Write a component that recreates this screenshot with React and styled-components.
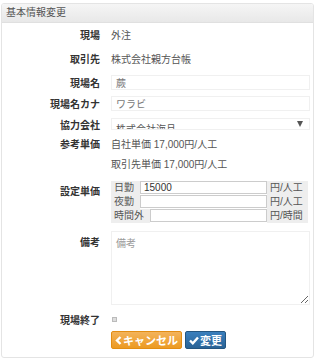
import React from "react";
import styled, { createGlobalStyle } from "styled-components";

const GlobalStyle = createGlobalStyle`
  html, body {
    margin: 0;
    padding: 0;
    background: #fff;
  }
  body {
    font-family: "Liberation Sans", "Noto Sans CJK JP", sans-serif;
    font-size: 10px;
    color: #333;
  }
`;

const Panel = styled.div`
  margin: 3px 3px 0 1px;
  width: 313px;
  box-sizing: border-box;
  border: 1px solid #e4e4e4;
  border-radius: 3px;
  overflow: hidden;
`;

const PanelHeader = styled.div`
  height: 18px;
  line-height: 18px;
  padding-left: 4px;
  color: #555;
  background: linear-gradient(#f5f5f5, #e8e8e8);
  border-bottom: 1px solid #e0e0e0;
`;

const Form = styled.div`
  display: grid;
  grid-template-columns: 98px 199px;
  column-gap: 11px;
  padding: 0 0 8px 0;
`;

const Label = styled.div`
  height: ${(p) => p.$h}px;
  display: flex;
  align-items: ${(p) => (p.$top ? "flex-start" : "center")};
  justify-content: flex-end;
  padding-top: ${(p) => p.$pt || 0}px;
  box-sizing: border-box;
  font-weight: bold;
  color: #333;
`;

const Value = styled.div`
  height: ${(p) => p.$h}px;
  display: flex;
  flex-direction: ${(p) => (p.$column ? "column" : "row")};
  align-items: ${(p) => (p.$column ? "stretch" : "center")};
  padding-top: ${(p) => p.$pt || 0}px;
  box-sizing: border-box;
  color: #555;
`;

const Line = styled.div`
  height: 20px;
  line-height: 20px;
`;

const TextInput = styled.div`
  width: 100%;
  height: 15px;
  line-height: 15px;
  border: 1px solid #f0f0f0;
  box-sizing: border-box;
  padding-left: 4px;
  color: #777;
`;

const Select = styled.div`
  position: relative;
  width: 100%;
  height: 12px;
  border: 1px solid #f0f0f0;
  box-sizing: border-box;
  overflow: hidden;
  padding-left: 4px;
  color: #555;
`;

const SelectText = styled.div`
  line-height: 14px;
  margin-top: 4px;
`;

const Arrow = styled.span`
  position: absolute;
  right: 6px;
  top: 2px;
  width: 0;
  height: 0;
  border-left: 3px solid transparent;
  border-right: 3px solid transparent;
  border-top: 6px solid #555;
`;

const Group = styled.div`
  display: flex;
  flex-direction: column;
  width: 197px;
`;

const GroupRow = styled.div`
  display: flex;
  height: 14px;
`;

const Addon = styled.span`
  background: #eee;
  color: #555;
  line-height: 14px;
  padding: 0 ${(p) => (p.$right ? 2 : 2)}px 0 3px;
  width: ${(p) => (p.$w ? `${p.$w}px` : "auto")};
  box-sizing: border-box;
  white-space: nowrap;
`;

const NumInput = styled.input`
  flex: 1;
  min-width: 0;
  height: 13px;
  margin: 0;
  border: 1px solid #ccc;
  box-sizing: border-box;
  padding: 0 3px;
  font: inherit;
  color: #333;
  outline: none;
`;

const TextArea = styled.textarea`
  width: 199px;
  height: 74px;
  margin: 0;
  border: 1px solid #f0f0f0;
  box-sizing: border-box;
  padding: 3px 4px;
  font: inherit;
  color: #555;
  resize: vertical;
  outline: none;
  &::placeholder {
    color: #999;
  }
`;

const Check = styled.span`
  display: inline-block;
  width: 5px;
  height: 5px;
  margin-left: 1px;
  background: #ddd;
  border: 1px solid #bbb;
  box-sizing: border-box;
`;

const Buttons = styled.div`
  display: flex;
  gap: 3px;
  align-items: center;
`;

const Button = styled.button`
  display: flex;
  align-items: center;
  gap: 1px;
  height: 18px;
  margin: 0;
  padding: 0 3px;
  border: 1px solid ${(p) => (p.$kind === "primary" ? "#245580" : "#e38d13")};
  border-radius: 2px;
  background: ${(p) =>
    p.$kind === "primary"
      ? "linear-gradient(#3a7fbd, #2a6396)"
      : "linear-gradient(#f3b35b, #ec9a22)"};
  color: #fff;
  font-family: "Liberation Sans", "Noto Sans CJK JP", sans-serif;
  font-size: 11px;
  font-weight: bold;
  cursor: pointer;
`;

const ChevronLeft = () => (
  <svg width="7" height="9" viewBox="0 0 7 9">
    <path d="M5.5 1 L2 4.5 L5.5 8" fill="none" stroke="#fff" strokeWidth="2.4" />
  </svg>
);

const CheckMark = () => (
  <svg width="10" height="9" viewBox="0 0 10 9">
    <path d="M1 4.5 L3.8 7.3 L9 1.5" fill="none" stroke="#fff" strokeWidth="2.4" />
  </svg>
);

export default function App() {
  return (
    <>
      <GlobalStyle />
      <Panel>
        <PanelHeader>基本情報変更</PanelHeader>
        <Form>
          <Label $h={22}>現場</Label>
          <Value $h={22}>外注</Value>

          <Label $h={26}>取引先</Label>
          <Value $h={26}>株式会社親方台帳</Value>

          <Label $h={22}>現場名</Label>
          <Value $h={22}>
            <TextInput>蕨</TextInput>
          </Value>

          <Label $h={20}>現場名カナ</Label>
          <Value $h={20}>
            <TextInput>ワラビ</TextInput>
          </Value>

          <Label $h={22}>協力会社</Label>
          <Value $h={22}>
            <Select>
              <SelectText>株式会社海旦</SelectText>
              <Arrow />
            </Select>
          </Value>

          <Label $h={41} $top>
            <Line>参考単価</Line>
          </Label>
          <Value $h={41} $column>
            <Line>自社単価 17,000円/人工</Line>
            <Line>取引先単価 17,000円/人工</Line>
          </Value>

          <Label $h={53} $top $pt={7}>
            設定単価
          </Label>
          <Value $h={53} $column $pt={5}>
            <Group>
              <GroupRow>
                <Addon $w={29}>日勤</Addon>
                <NumInput defaultValue="15000" />
                <Addon $w={41}>円/人工</Addon>
              </GroupRow>
              <GroupRow>
                <Addon $w={29}>夜勤</Addon>
                <NumInput />
                <Addon $w={41}>円/人工</Addon>
              </GroupRow>
              <GroupRow>
                <Addon $w={39}>時間外</Addon>
                <NumInput />
                <Addon $w={41}>円/時間</Addon>
              </GroupRow>
            </Group>
          </Value>

          <Label $h={78} $top $pt={5}>
            備考
          </Label>
          <Value $h={78} $column $pt={2}>
            <TextArea placeholder="備考" />
          </Value>

          <Label $h={24}>現場終了</Label>
          <Value $h={24}>
            <Check />
          </Value>

          <div />
          <Buttons>
            <Button>
              <ChevronLeft />
              キャンセル
            </Button>
            <Button $kind="primary">
              <CheckMark />
              変更
            </Button>
          </Buttons>
        </Form>
      </Panel>
    </>
  );
}
